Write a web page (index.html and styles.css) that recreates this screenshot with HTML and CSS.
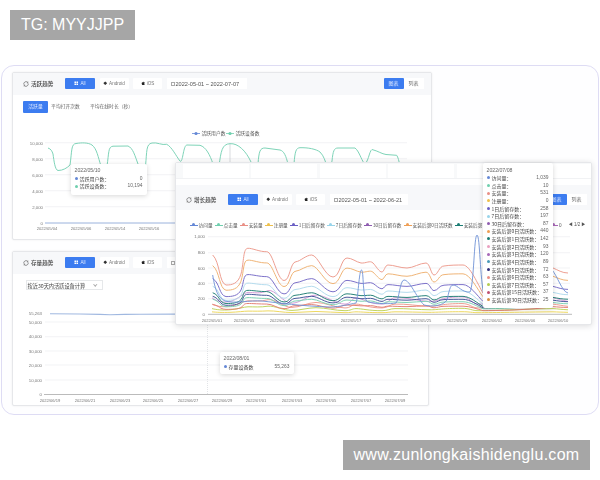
FILE: index.html
```html
<!DOCTYPE html>
<html lang="zh">
<head>
<meta charset="utf-8">
<title>趋势</title>
<link rel="stylesheet" href="styles.css">
</head>
<body>
<svg class="defs" aria-hidden="true">
  <symbol id="i-refresh" viewBox="0 0 12 12"><path d="M2 7.5A4.4 4.4 0 0 1 9.5 3M10 4.5A4.4 4.4 0 0 1 2.5 9" fill="none" stroke="#555" stroke-width="1.2"/><path d="M9.8 1v2.6H7.4M2.2 11V8.4h2.4" fill="none" stroke="#555" stroke-width="1"/></symbol>
  <symbol id="i-grid" viewBox="0 0 10 10"><path d="M1 1h3.5v3.5H1zM5.5 1H9v3.5H5.5zM1 5.5h3.5V9H1zM5.5 5.5H9V9H5.5z" fill="#fff"/></symbol>
  <symbol id="i-android" viewBox="0 0 10 10"><path d="M5 1 L7 3 L9 5 L7 7 L5 9 L3 7 L1 5 L3 3Z" fill="#333"/></symbol>
  <symbol id="i-apple" viewBox="0 0 10 10"><path d="M6.6 1c-.8.2-1.4.8-1.4 1.7.8 0 1.4-.8 1.4-1.7zM5 3.3c-.6 0-1-.4-1.7-.4C2.200 2.900 1.500 3.900 1.500 5.300c0 1.700 1.100 3.700 2.100 3.700.6 0 .8-.3 1.400-.3s.8.3 1.400.3c.9 0 1.700-1.400 2-2.400-1.400-.6-1.500-2.700-.2-3.300-.5-.6-1.100-.9-1.700-.9-.7 0-1 .4-1.500.4z" fill="#222"/></symbol>
</svg>

<main class="canvas">
  <div class="frame">

    <section class="card card-active">
      <header class="head">
        <svg class="ic-refresh"><use href="#i-refresh"/></svg>
        <h2 class="title">活跃趋势</h2>
        <button class="seg seg-on"><svg class="ic"><use href="#i-grid"/></svg>All</button>
        <button class="seg"><svg class="ic"><use href="#i-android"/></svg>Android</button>
        <button class="seg"><svg class="ic"><use href="#i-apple"/></svg>iOS</button>
        <div class="date"><i class="box"></i>2022-05-01 ~ 2022-07-07</div>
        <div class="view"><span class="view-on">图表</span><span class="view-off">列表</span></div>
      </header>
      <nav class="tabs">
        <span class="tab tab-on">活跃量</span><span class="tab tab-b">平均打开次数</span><span class="tab tab-c">平均在线时长（秒）</span>
      </nav>
      <svg class="chart-a" viewBox="13 115 418 125">
        <g class="grid">
          <path d="M45 141.700H407M45 157.700H407M45 173.700H407M45 189.700H407M45 205.700H407"/>
        </g>
        <path class="axis-blue" d="M45 222H407"/>
        <path class="cross" d="M230 142V222"/>
        <g class="lbl-end">
          <text x="43" y="143.500">10,000</text><text x="43" y="159.500">8,000</text><text x="43" y="175.500">6,000</text><text x="43" y="191.500">4,000</text><text x="43" y="207.500">2,000</text><text x="43" y="223.500">0</text>
        </g>
        <g class="lbl-mid">
          <text x="47" y="228.500">2022/05/04</text><text x="81" y="228.500">2022/05/06</text><text x="115" y="228.500">2022/05/14</text><text x="149" y="228.500">2022/05/16</text>
        </g>
        <g class="legend-svg">
          <path class="m-blue" d="M192 132.500h8"/><circle class="d-blue" cx="196" cy="132.500" r="1.600"/><text x="201.500" y="134.200">活跃用户数</text>
          <path class="m-green" d="M226 132.500h8"/><circle class="d-green" cx="230" cy="132.500" r="1.600"/><text x="235.500" y="134.200">活跃设备数</text>
        </g>
        <path class="line-green" d="M48 147C51 148 52 150 53 153C54 160 55 169 58 169.500C63 169.500 67 167 70 164C72 150 71 143 76 142.500C82 141.500 88 141.500 92 144C97 148 98 156 101 165C103 172 105 172 107 165C109 152 108 145.700 113 145.200L128 145C133 147 135 155 138 163C140 170 143 172 145.500 165C147 150 146 143 152 142C157 141 162 144.500 166.700 143.300C172 146 176 155 180 160C183 163 183 144 187 144L200 144.300C206 146 210 154 213 163C215 171 217 172 219 165C221 150 222 143 230 142.700C238 142 246 150 251 161C253 171 256 172 258 163C259 150 260 147 265 147L280 149C284 150 286 155 288 163C290 171 292 172 294 163C295 150 296 147 300 146.700C308 146.500 316 148 320 151C324 155 325 160 327 165C329 172 330 168 332 160C333 150 334 147 338 147L355 147C359 150 361 158 364 162C368 164 369 150 372 148.500C378 150 382 153 386 153.500L396.700 154.300C398 156 399 160 400 165"/>
      </svg>
      <div class="tip tip-a">
        <div class="tip-date">2022/05/10</div>
        <div class="tip-row s-blue"><span>活跃用户数：</span><b>0</b></div>
        <div class="tip-row s-green"><span>活跃设备数：</span><b>10,194</b></div>
      </div>
    </section>

    <section class="card card-stock">
      <header class="head">
        <svg class="ic-refresh"><use href="#i-refresh"/></svg>
        <h2 class="title">存量趋势</h2>
        <button class="seg seg-on"><svg class="ic"><use href="#i-grid"/></svg>All</button>
        <button class="seg"><svg class="ic"><use href="#i-android"/></svg>Android</button>
        <button class="seg"><svg class="ic"><use href="#i-apple"/></svg>iOS</button>
        <div class="date"><i class="box"></i>2022-06-19 ~ 2022-07-09</div>
      </header>
      <div class="select-row"><div class="select">按近30天内活跃设备计算<i class="chev"></i></div></div>
      <svg class="chart-b" viewBox="13 296 414 109">
        <g class="grid"><path d="M45 322H408M45 336.700H408M45 351H408M45 365H408M45 380H408"/></g>
        <path class="axis-grey" d="M44 394.500H408"/>
        <path class="cross-dash" d="M207.500 313V394"/>
        <path class="line-stock" d="M50 313.800 80 314 100 314.400 110 314.800 125 314.400 140 314.300 175 314.100"/>
        <g class="lbl-end">
          <text x="42" y="314.500">55,263</text><text x="42" y="323.500">50,000</text><text x="42" y="338">40,000</text><text x="42" y="352.500">30,000</text><text x="42" y="366.500">20,000</text><text x="42" y="381.500">10,000</text><text x="42" y="396">0</text>
        </g>
        <g class="lbl-mid">
          <text x="50" y="401.500">2022/06/19</text><text x="85" y="401.500">2022/06/21</text><text x="120" y="401.500">2022/06/23</text><text x="153" y="401.500">2022/06/25</text><text x="188" y="401.500">2022/06/27</text><text x="222" y="401.500">2022/06/29</text><text x="256" y="401.500">2022/07/01</text><text x="292" y="401.500">2022/07/03</text><text x="326" y="401.500">2022/07/05</text><text x="361" y="401.500">2022/07/07</text><text x="395" y="401.500">2022/07/09</text>
        </g>
      </svg>
      <div class="tip tip-b">
        <div class="tip-date">2022/08/01</div>
        <div class="tip-row s-blue"><span>存量设备数</span><b>55,263</b></div>
      </div>
    </section>

    <section class="card card-growth">
      <div class="strip"><i></i><i></i><i></i><i></i><i></i><i></i></div>
      <header class="head head-growth">
        <svg class="ic-refresh"><use href="#i-refresh"/></svg>
        <h2 class="title">增长趋势</h2>
        <button class="seg seg-on"><svg class="ic"><use href="#i-grid"/></svg>All</button>
        <button class="seg"><svg class="ic"><use href="#i-android"/></svg>Android</button>
        <button class="seg"><svg class="ic"><use href="#i-apple"/></svg>iOS</button>
        <div class="date date-g"><i class="box"></i>2022-05-01 ~ 2022-06-21</div>
        <div class="view"><span class="view-on">图表</span><span class="view-off">列表</span></div>
      </header>
      <div class="legend">
        <span class="lg s-blue">访问量</span><span class="lg s-green">点击量</span><span class="lg s-red">安装量</span><span class="lg s-yellow">注册量</span><span class="lg s-indigo">1日后留存数</span><span class="lg s-sky">7日后留存数</span><span class="lg s-purple">30日后留存数</span><span class="lg s-orange">安装后第0日活跃数</span><span class="lg s-teal">安装后第1日活跃数</span>
        <span class="lg lg-end s-plum">0</span>
        <span class="pager">◀ 1/2 ▶</span>
      </div>
      <svg class="chart-c" viewBox="176 232 415 92">
        <defs>
          <path id="w" class="wave" d="M212.700 255C220 262 219 283 226 285C232 285 238 284 241 274C244 262 243 248 248 248.300C252 248 260 252 266.700 251.700C273 251.500 277 280 284 280.500C290 281 290 262 296 261.700C300 261.500 306 255 311.700 255C318 255 325 277 333 277C340 277 341 258 347 258C352 258 356 262 361 263C366 263.500 370 260 373 263C376 266 379 272 382 272C384 272 385 265 388 265C394 265 400 268 407 268C413 268 420 263 426 263C430 263 431 275 434 275C438 275 439 266 444 266C450 265 458 265 463 265C470 265 478 285 483 293C495 293 530 290 553 268C558 270 562 273 568 273"/>
          <path id="v" class="wave" d="M212 296C217 300 222 302 230 300C238 298 244 290 248 290C254 290 260 292 268 288C275 286 283 302 292 302C300 302 308 293 316 293C326 293 335 303 345 303C351 303 352 296 356 296C362 296 368 303 382 303C388 303 390 296 395 296C405 295 420 300 430 300C438 300 442 295 462 295C470 295 472 303 478 303C495 303 520 298 553 296C558 297 562 299 568 300"/>
        </defs>
        <g class="grid"><path d="M208 236.700H570M208 252.700H570M208 268H570M208 283.300H570M208 298.700H570"/></g>
        <path class="axis-grey" d="M208 314.300H572"/>
        <g class="lbl-end">
          <text x="205" y="238.400">1,000</text><text x="205" y="254.400">800</text><text x="205" y="269.700">600</text><text x="205" y="285">400</text><text x="205" y="300.400">200</text><text x="205" y="316">0</text>
        </g>
        <g class="lbl-mid">
          <text x="212" y="321.500">2022/05/01</text><text x="244" y="321.500">2022/05/05</text><text x="280" y="321.500">2022/05/09</text><text x="315" y="321.500">2022/05/13</text><text x="351" y="321.500">2022/05/17</text><text x="387" y="321.500">2022/05/21</text><text x="421" y="321.500">2022/05/25</text><text x="457" y="321.500">2022/05/29</text><text x="492" y="321.500">2022/06/02</text><text x="525" y="321.500">2022/06/06</text><text x="558" y="321.500">2022/06/10</text>
        </g>
        <use href="#v" class="ln-yellow" transform="translate(0 314) scale(1 .12) translate(0 -314)"/>
        <use href="#v" class="ln-olive" transform="translate(0 314) scale(1 .3) translate(0 -314)"/>
        <use href="#v" class="ln-salmon" transform="translate(3 314) scale(1 .55) translate(-3 -314)"/>
        <use href="#w" class="ln-red" transform="translate(0 314) scale(1 .16) translate(0 -314)"/>
        <use href="#v" class="ln-plum" transform="translate(-4 314) scale(1 .9) translate(4 -314)"/>
        <use href="#w" class="ln-green" transform="translate(2 314) scale(1 .25) translate(-2 -314)"/>
        <use href="#w" class="ln-navy" transform="translate(-2 314) scale(1 .3) translate(2 -314)"/>
        <use href="#w" class="ln-teal" transform="translate(0 314) scale(1 .36) translate(0 -314)"/>
        <use href="#w" class="ln-sky" transform="translate(0 314) scale(1 .47) translate(0 -314)"/>
        <use href="#w" class="ln-indigo" transform="translate(0 314) scale(1 .6) translate(0 -314)"/>
        <use href="#w" class="ln-orange" transform="translate(0 314) scale(1 .82) translate(0 -314)"/>
        <use href="#w" class="ln-salmon"/>
        <path class="ln-plain-blue" d="M212.700 275C215 290 218 298 225 301C235 304 250 300 262 301C280 303 300 306 330 307C340 307 350 304 356 303C358 300 359 270 361.500 270C364 270 362 300 368 302C378 304 390 304 396 303C399 300 400 280 404 280C410 280 416 297 424 305C432 307 443 306 447 300C449 292 450 285 453 285C458 285 462 293 470 292C474 285 474 235 477 235C480 235 480 280 484 295C500 302 540 290 552 270C557 275 562 292 568 293"/>
      </svg>
      <div class="tip tip-c">
        <div class="tip-date">2022/07/08</div>
        <div class="tip-row s-blue"><span>访问量：</span><b>1,039</b></div>
        <div class="tip-row s-green"><span>点击量：</span><b>10</b></div>
        <div class="tip-row s-red"><span>安装量：</span><b>531</b></div>
        <div class="tip-row s-yellow"><span>注册量：</span><b>0</b></div>
        <div class="tip-row s-indigo"><span>1日后留存数：</span><b>258</b></div>
        <div class="tip-row s-sky"><span>7日后留存数：</span><b>197</b></div>
        <div class="tip-row s-purple"><span>30日后留存数：</span><b>87</b></div>
        <div class="tip-row s-orange"><span>安装后第0日活跃数：</span><b>440</b></div>
        <div class="tip-row s-teal"><span>安装后第1日活跃数：</span><b>142</b></div>
        <div class="tip-row s-pink"><span>安装后第2日活跃数：</span><b>93</b></div>
        <div class="tip-row s-plum"><span>安装后第3日活跃数：</span><b>120</b></div>
        <div class="tip-row s-cyan"><span>安装后第4日活跃数：</span><b>89</b></div>
        <div class="tip-row s-navy"><span>安装后第5日活跃数：</span><b>72</b></div>
        <div class="tip-row s-red"><span>安装后第6日活跃数：</span><b>63</b></div>
        <div class="tip-row s-olive"><span>安装后第7日活跃数：</span><b>57</b></div>
        <div class="tip-row s-rose"><span>安装后第15日活跃数：</span><b>37</b></div>
        <div class="tip-row s-amber"><span>安装后第30日活跃数：</span><b>25</b></div>
      </div>
    </section>
  </div>

  <div class="badge badge-tg">TG: MYYJJPP</div>
  <div class="badge badge-url">www.zunlongkaishidenglu.com</div>
</main>
</body>
</html>
```

FILE: styles.css
```css
* { box-sizing: border-box; margin: 0; padding: 0; }
html, body { background: #fff; overflow: hidden; }
body { font-family: "Noto Sans CJK SC", "Liberation Sans", sans-serif; color: #555; }
.defs { width: 0; height: 0; position: absolute; }

.canvas { position: relative; width: 600px; height: 480px; }
.frame {
  position: absolute; left: 1px; top: 65px; width: 598px; height: 350px;
  border: 1.500px solid #dedcf4; border-radius: 13px; background: #fefeff;
  filter: blur(.55px);
}

/* windows on the free canvas of the frame */
.card { position: absolute; background: #fff; border: 1px solid #e6e7ea; border-radius: 2px; box-shadow: 0 0 2px rgba(0,0,0,.08); }
.card-active { left: 9.500px; top: 5.500px; width: 420px; height: 168px; }
.card-stock { left: 9.500px; top: 184.500px; width: 417px; height: 155px; }
.card-growth { left: 172.500px; top: 95.500px; width: 417px; height: 163px; box-shadow: 0 1px 6px rgba(0,0,0,.14); }

.head { display: flex; align-items: center; height: 22px; padding-left: 10px; background: #f7f8fa; }
.head-growth { height: 25px; padding: 5px 0 0 10px; background: #f7f8fa; }
.ic-refresh { width: 6px; height: 6px; flex: none; }
.title { font-size: 5.600px; font-weight: 500; color: #444; width: 36.500px; padding-left: 2.500px; flex: none; }
.seg {
  display: flex; align-items: center; justify-content: center; gap: 1.500px;
  width: 29px; height: 10.500px; margin-right: 4.500px; border: 0; border-radius: 1px;
  background: #fff; color: #777; font: 4.600px "Liberation Sans", sans-serif; flex: none;
}
.seg-on { background: #3c7cf0; color: #dfe9ff; width: 30px; }
.ic { width: 4.500px; height: 4.500px; }
.date {
  display: flex; align-items: center; gap: 1px; width: 80px; height: 10.500px; padding-left: 4px;
  background: #fff; font: 5.600px "Liberation Sans", sans-serif; color: #555; white-space: nowrap; flex: none;
}
.date-g { width: 78px; }
.box { width: 4px; height: 4px; border: .5px solid #aaa; flex: none; }
.view { display: flex; margin-left: auto; margin-right: 7px; font-size: 5px; line-height: 10.500px; flex: none; }
.view-on { width: 20px; text-align: center; background: #3c7cf0; color: #dfe9ff; border-radius: 1px; }
.view-off { width: 20px; text-align: center; background: #fff; color: #666; }
.head-growth .view { margin-right: 4px; }

.tabs { display: flex; padding: 6px 0 3px 10.500px; height: 21px; }
.tab { font-size: 4.800px; line-height: 10.500px; text-align: center; color: #666; background: #fff; }
.tab-on { width: 25px; background: #3c7cf0; color: #dfe9ff; border-radius: 1px; }
.tab-b { width: 35px; }
.tab-c { width: 57px; }

.chart-a { display: block; width: 418px; height: 125px; }
.chart-b { display: block; width: 414px; height: 109px; }
.chart-c { display: block; width: 415px; height: 92px; }

.grid path { stroke: #eceef0; stroke-width: .7; fill: none; }
.axis-blue { stroke: #8fa9d8; stroke-width: .9; fill: none; }
.axis-grey { stroke: #aaa; stroke-width: .8; fill: none; }
.cross { stroke: #c0c3c9; stroke-width: .6; fill: none; }
.cross-dash { stroke: #cfd1d6; stroke-width: .6; stroke-dasharray: 1 1; fill: none; }
.lbl-end text { font: 4.300px "Liberation Sans", sans-serif; fill: #777; text-anchor: end; }
.lbl-mid text { font: 4.100px "Liberation Sans", sans-serif; fill: #777; text-anchor: middle; }
.legend-svg text { font-size: 4.800px; fill: #555; }
.m-blue { stroke: #6488d6; stroke-width: .8; }
.m-green { stroke: #6fcfae; stroke-width: .8; }
.d-blue { fill: #6488d6; }
.d-green { fill: #6fcfae; }
.line-green { fill: none; stroke: #7ed4b8; stroke-width: 1; stroke-linejoin: round; }
.line-stock { fill: none; stroke: #a0b8e0; stroke-width: 1.100; }

.select-row { padding: 6px 0 6px 13px; height: 22px; }
.select {
  position: relative; width: 77px; height: 10px; padding-left: 1px;
  border: .5px solid #e6e8ea; font-size: 5.200px; line-height: 9px; color: #444; white-space: nowrap;
}
.chev {
  position: absolute; right: 5px; top: 2.500px; width: 2.500px; height: 2.500px;
  border-right: .5px solid #aaa; border-bottom: .5px solid #aaa; transform: rotate(45deg);
}

.legend { display: flex; align-items: center; gap: 2px; height: 8px; margin-top: 11px; margin-bottom: 3px; padding-left: 14px; white-space: nowrap; overflow: hidden; position: relative; }
.lg { position: relative; padding-left: 9px; font-size: 4.700px; color: #555; flex: none; }
.lg::before { content: ""; position: absolute; left: 0; top: 50%; width: 8px; height: .8px; background: var(--c); }
.lg::after { content: ""; position: absolute; left: 2.500px; top: 50%; width: 3px; height: 3px; margin-top: -1.200px; border-radius: 50%; background: var(--c); }
.lg-end { position: absolute; right: 29px; top: 1px; }
.pager { position: absolute; right: 4px; top: 0; padding-left: 3px; background: #fff; font: 4.500px/8px "Liberation Sans", sans-serif; color: #555; }

.s-blue { --c: #6488d6; } .s-green { --c: #6fcfae; } .s-red { --c: #e98f86; } .s-yellow { --c: #eec04c; }
.s-indigo { --c: #6a5fc4; } .s-sky { --c: #98d4ea; } .s-purple { --c: #8e5cb0; } .s-orange { --c: #ef9f55; }
.s-teal { --c: #1b7d74; } .s-pink { --c: #eaa0c0; } .s-plum { --c: #a868b8; } .s-cyan { --c: #4a9ab8; }
.s-navy { --c: #34307c; } .s-olive { --c: #b4cc50; } .s-rose { --c: #c05070; } .s-amber { --c: #d89040; }

.wave { fill: none; stroke-linejoin: round; stroke-width: 1; vector-effect: non-scaling-stroke; }
.ln-yellow { stroke: #eed860; } .ln-olive { stroke: #c0d460; } .ln-salmon { stroke: #ee9f92; }
.ln-red { stroke: #e58479; } .ln-plum { stroke: #d49ed8; } .ln-green { stroke: #7fd3b5; }
.ln-navy { stroke: #4a5a9c; } .ln-teal { stroke: #2a857b; } .ln-sky { stroke: #b4dcee; }
.ln-indigo { stroke: #7d72ca; } .ln-orange { stroke: #f0b578; }
.ln-plain-blue { fill: none; stroke: #6f92d6; stroke-width: .9; stroke-linejoin: round; }

.tip { position: absolute; background: #fff; border-radius: 2px; box-shadow: 0 1px 5px rgba(0,0,0,.16); color: #444; font-size: 5px; }
.tip-date { font: 5.200px/7.600px "Liberation Sans", sans-serif; color: #666; }
.tip-row { position: relative; display: flex; justify-content: space-between; padding-left: 5px; line-height: 7.630px; height: 7.630px; white-space: nowrap; }
.tip-row::before { content: ""; position: absolute; left: 0; top: 2.300px; width: 3px; height: 3px; border-radius: 50%; background: var(--c); }
.tip-row b { font: 400 4.900px/7.630px "Liberation Sans", sans-serif; color: #666; }
.tip-a { left: 58px; top: 91px; width: 76px; height: 31px; padding: 3.500px 4px; }
.tip-b { left: 207px; top: 100px; width: 74px; height: 22px; padding: 3.500px 4px; }
.tip-c { left: 307px; top: 0; width: 70px; height: 145px; padding: 4px 4px 0; }

.strip { display: flex; gap: 2.500px; height: 16px; padding: 1px 2px 0 7px; background: #f8f9fa; border-bottom: .5px solid #f1f2f4; overflow: hidden; }
.strip i { width: 66px; height: 14.500px; background: #fff; flex: none; }
.card-growth .head-growth { margin-top: 6px; }

.badge { position: absolute; height: 30px; background: #a6a6a6; color: #fff; font: 16px/30px "Liberation Sans", sans-serif; text-align: center; }
.badge-tg { left: 10px; top: 10px; width: 125px; }
.badge-url { left: 343px; top: 440px; width: 247px; letter-spacing: .3px; }
```
